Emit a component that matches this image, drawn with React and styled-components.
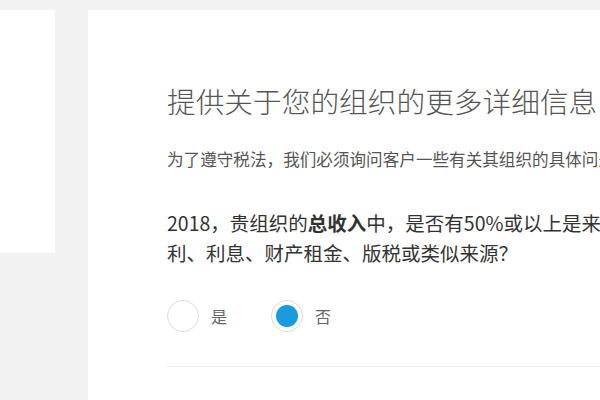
import React, { useState } from "react";
import styled, { createGlobalStyle } from "styled-components";

const GlobalStyle = createGlobalStyle`
    html, body {
        margin: 0;
        padding: 0;
        background: #f2f2f2;
        overflow: hidden;
        font-family: "Noto Sans CJK SC", "Noto Sans", sans-serif;
    }
`;

const Page = styled.div`
    display: flex;
    align-items: flex-start;
    gap: 33px;
    padding-top: 10px;
    width: 900px;
    height: 400px;
`;

const SidePanel = styled.div`
    width: 55px;
    height: 243px;
    background: #fff;
    flex-shrink: 0;
`;

const Card = styled.div`
    width: 760px;
    height: 420px;
    background: #fff;
    flex-shrink: 0;
    padding: 71px 0 0 79px;
    box-sizing: border-box;
`;

const Title = styled.h1`
    margin: 0;
    font-size: 28.7px;
    font-weight: 300;
    color: #555;
    line-height: 40px;
    white-space: nowrap;
`;

const Intro = styled.p`
    margin: 26px 0 0;
    font-size: 16.6px;
    color: #555;
    line-height: 24px;
    white-space: nowrap;
`;

const Question = styled.p`
    margin: 37px 0 0;
    font-size: 19.5px;
    color: #333;
    line-height: 30px;
    width: 476px;

    strong {
        font-weight: 700;
    }
`;

const Options = styled.div`
    display: flex;
    align-items: center;
    gap: 44px;
    margin-top: 32px;
    padding-bottom: 34px;
    border-bottom: 1px solid #ececec;
    width: 560px;
`;

const Option = styled.label`
    display: flex;
    align-items: center;
    gap: 12px;
    font-size: 16px;
    color: #666;
    cursor: pointer;
`;

const RadioCircle = styled.span`
    width: 32px;
    height: 32px;
    border-radius: 50%;
    border: 1px solid #dcdcdc;
    box-sizing: border-box;
    display: flex;
    align-items: center;
    justify-content: center;

    &::after {
        content: "";
        width: 22px;
        height: 22px;
        border-radius: 50%;
        background: ${(p) => (p.$checked ? "#1a9be0" : "transparent")};
    }
`;

const App = () => {
    const [answer, setAnswer] = useState("no");

    return (
        <>
            <GlobalStyle />
            <Page>
                <SidePanel />
                <Card>
                    <Title>提供关于您的组织的更多详细信息</Title>
                    <Intro>为了遵守税法，我们必须询问客户一些有关其组织的具体问题。</Intro>
                    <Question>
                        2018，贵组织的<strong>总收入</strong>中，是否有50%或以上是来自股利、利息、财产租金、版税或类似来源？
                    </Question>
                    <Options>
                        <Option onClick={() => setAnswer("yes")}>
                            <RadioCircle $checked={answer === "yes"} />
                            是
                        </Option>
                        <Option onClick={() => setAnswer("no")}>
                            <RadioCircle $checked={answer === "no"} />
                            否
                        </Option>
                    </Options>
                </Card>
            </Page>
        </>
    );
};

export default App;
